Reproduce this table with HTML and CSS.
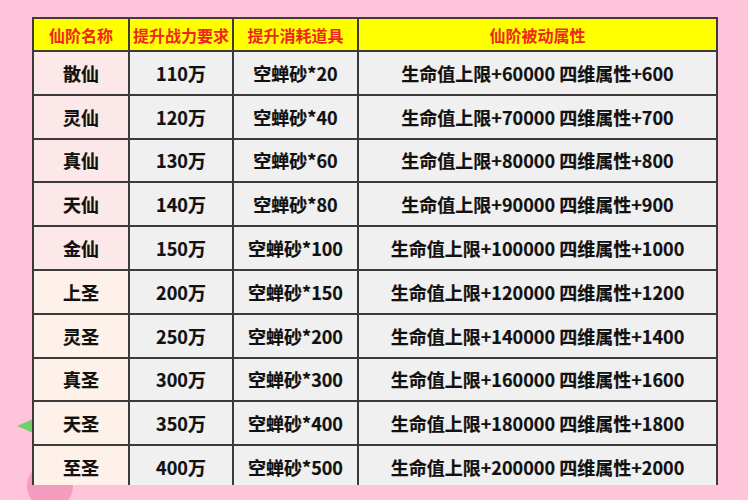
FILE: index.html
```html
<!DOCTYPE html>
<html lang="zh">
<head>
<meta charset="utf-8">
<link rel="stylesheet" href="styles.css">
</head>
<body>
<div class="page">
  <div class="leaf"></div>
  <div class="blob"></div>
  <div class="frame">
    <table class="tbl">
      <colgroup>
        <col class="c1"><col class="c2"><col class="c3"><col class="c4">
      </colgroup>
      <thead>
        <tr><th>仙阶名称</th><th>提升战力要求</th><th>提升消耗道具</th><th>仙阶被动属性</th></tr>
      </thead>
      <tbody>
        <tr class="xian"><td>散仙</td><td>110万</td><td>空蝉砂*20</td><td>生命值上限+60000 四维属性+600</td></tr>
        <tr class="xian"><td>灵仙</td><td>120万</td><td>空蝉砂*40</td><td>生命值上限+70000 四维属性+700</td></tr>
        <tr class="xian"><td>真仙</td><td>130万</td><td>空蝉砂*60</td><td>生命值上限+80000 四维属性+800</td></tr>
        <tr class="xian"><td>天仙</td><td>140万</td><td>空蝉砂*80</td><td>生命值上限+90000 四维属性+900</td></tr>
        <tr class="xian"><td>金仙</td><td>150万</td><td>空蝉砂*100</td><td>生命值上限+100000 四维属性+1000</td></tr>
        <tr class="sheng"><td>上圣</td><td>200万</td><td>空蝉砂*150</td><td>生命值上限+120000 四维属性+1200</td></tr>
        <tr class="sheng"><td>灵圣</td><td>250万</td><td>空蝉砂*200</td><td>生命值上限+140000 四维属性+1400</td></tr>
        <tr class="sheng"><td>真圣</td><td>300万</td><td>空蝉砂*300</td><td>生命值上限+160000 四维属性+1600</td></tr>
        <tr class="sheng"><td>天圣</td><td>350万</td><td>空蝉砂*400</td><td>生命值上限+180000 四维属性+1800</td></tr>
        <tr class="sheng"><td>至圣</td><td>400万</td><td>空蝉砂*500</td><td>生命值上限+200000 四维属性+2000</td></tr>
      </tbody>
    </table>
  </div>
</div>
</body>
</html>
```
FILE: styles.css
```css
html, body {
  margin: 0;
  padding: 0;
}
body {
  background: #ffc3da;
  font-family: "Noto Sans CJK SC", "Noto Sans", sans-serif;
}
.page {
  position: relative;
  width: 748px;
  height: 500px;
  overflow: hidden;
  padding: 17px 0 0 31px;
  box-sizing: border-box;
}
.leaf {
  position: absolute;
  left: 17px;
  top: 419px;
  width: 0;
  height: 0;
  border-top: 7px solid transparent;
  border-bottom: 7px solid transparent;
  border-right: 16px solid #6fd06a;
}
.blob {
  position: absolute;
  left: 27px;
  top: 463px;
  width: 46px;
  height: 46px;
  border-radius: 50%;
  background: #f59bbd;
}
.frame {
  position: relative;
  width: 689px;
  height: 468px;
  overflow: hidden;
}
.tbl {
  border-collapse: collapse;
  table-layout: fixed;
  width: 684px;
  margin-left: 1px;
}
.c1 { width: 96px; }
.c2 { width: 104px; }
.c3 { width: 125px; }
.c4 { width: 359px; }
.tbl th, .tbl td {
  border: 2px solid #3d3a3c;
  text-align: center;
  padding: 0;
  font-weight: 700;
}
.tbl th {
  background: #ffff00;
  color: #f0261c;
  font-size: 16px;
  height: 31px;
}
.tbl td {
  background: #f0f0f0;
  color: #111;
  font-size: 18px;
  height: 41.8px;
  -webkit-text-stroke: 0.2px #111;
}
.xian td:first-child { background: #fce8e8; }
.sheng td:first-child { background: #fdf1e9; }
```
